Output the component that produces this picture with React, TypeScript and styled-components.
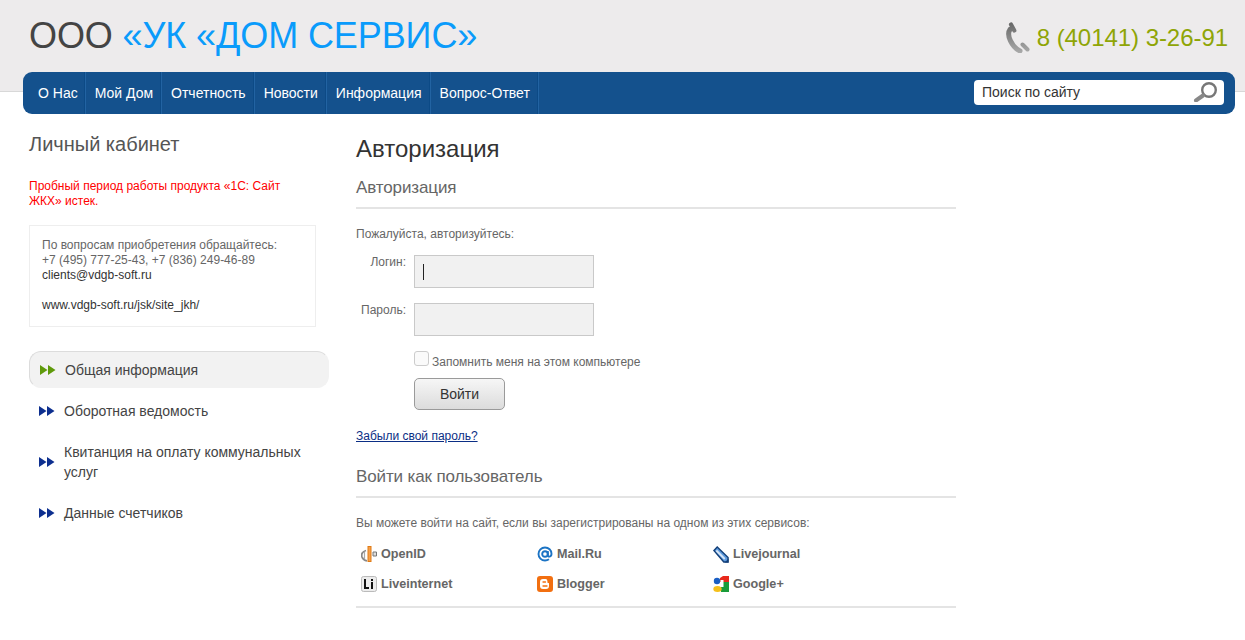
import React from 'react'
import styled, { createGlobalStyle } from 'styled-components'

const GlobalStyle = createGlobalStyle`
  html, body {
    margin: 0;
    background: #fff;
    font-family: "Liberation Sans", Arial, sans-serif;
    overflow: hidden;
  }
`

const Page = styled.div`
  width: 1245px;
  height: 640px;
  overflow: hidden;
`

const Header = styled.header`
  align-items: flex-start;
  background: #edebec;
  border-bottom: 1px solid #d8d8d8;
  box-sizing: border-box;
  display: flex;
  height: 92px;
  justify-content: space-between;
  padding: 15px 17px 0 29px;
`

const Logo = styled.div`
  color: #444;
  font-size: 36px;
  letter-spacing: -0.1px;
  line-height: 42px;
  white-space: nowrap;
`

const LogoAccent = styled.span`
  color: #0a9bfb;
`

const Phone = styled.div`
  align-items: center;
  color: #8fa506;
  display: flex;
  font-size: 24px;
  gap: 7px;
  letter-spacing: -0.05px;
  line-height: 30px;
  margin-top: 7px;
`

const Nav = styled.nav`
  align-items: stretch;
  background: #14518d;
  border-radius: 9px;
  display: flex;
  height: 42px;
  justify-content: space-between;
  margin: -20px 10px 0 23px;
  position: relative;
`

const NavList = styled.ul`
  display: flex;
  list-style: none;
  margin: 0;
  padding: 0 0 0 6px;
`

const NavItem = styled.li`
  border-right: 1px solid #0c4a86;
  box-shadow: 1px 0 0 #2263a2;
  color: #fff;
  font-size: 14px;
  line-height: 42px;
  padding: 0 7px 0 10px;

  &:first-child {
    padding: 0 6px 0 9px;
  }
`

const Search = styled.div`
  align-items: center;
  background: #fff;
  border-radius: 4px;
  box-sizing: border-box;
  color: #333;
  display: flex;
  font-size: 14px;
  height: 25px;
  justify-content: space-between;
  line-height: 23px;
  margin: 8px 11px 0 0;
  padding: 0 6px 1px 8px;
  width: 250px;
`

const Content = styled.div`
  display: flex;
  padding: 0 0 0 29px;
`

const Sidebar = styled.aside`
  flex: none;
  padding-top: 18px;
  width: 327px;
`

const SideTitle = styled.div`
  color: #555;
  font-size: 20px;
  line-height: 24px;
`

const Warning = styled.div`
  color: #ff0000;
  font-size: 12px;
  line-height: 15px;
  margin-top: 23px;
  width: 280px;
`

const InfoBox = styled.div`
  border: 1px solid #eee;
  box-sizing: border-box;
  color: #666;
  font-size: 12px;
  height: 102px;
  line-height: 15px;
  margin-top: 16px;
  padding: 12px 12px 0;
  width: 287px;
`

const Dark = styled.span`
  color: #333;
`

const Menu = styled.ul`
  display: flex;
  flex-direction: column;
  list-style: none;
  margin: 24px 0 0;
  padding: 0;
  width: 300px;
`

const MenuItem = styled.li<{ $active?: boolean }>`
  align-items: center;
  background: ${(p) => (p.$active ? '#f2f2f2' : 'transparent')};
  border: 1px solid ${(p) => (p.$active ? '#dcdcdc' : 'transparent')};
  border-bottom-color: ${(p) => (p.$active ? '#f2f2f2' : 'transparent')};
  border-right-color: ${(p) => (p.$active ? '#f2f2f2' : 'transparent')};
  border-radius: 12px;
  box-sizing: border-box;
  color: #444;
  display: flex;
  font-size: 14px;
  gap: 9px;
  line-height: 20px;
  margin-bottom: ${(p) => (p.$active ? '2px' : '0')};
  padding: ${(p) => (p.$active ? '8px 10px 7px' : '10px 9px 9px')};
`

const MenuText = styled.span`
  width: 250px;
`

const Main = styled.main`
  flex: none;
  padding-top: 21px;
  width: 600px;
`

const PageTitle = styled.h1`
  color: #333;
  font-size: 24px;
  font-weight: 400;
  line-height: 28px;
  margin: 0;
`

const SectionTitle = styled.h2<{ $top: number }>`
  border-bottom: 2px solid #e4e4e4;
  color: #666;
  font-size: 17px;
  font-weight: 400;
  letter-spacing: -0.12px;
  line-height: 20px;
  margin: ${(p) => p.$top}px 0 0;
  padding-bottom: 9px;
`

const Hint = styled.div<{ $top: number }>`
  color: #666;
  font-size: 12px;
  line-height: 14px;
  margin-top: ${(p) => p.$top}px;
`

const FormRow = styled.div<{ $top: number }>`
  display: flex;
  gap: 8px;
  margin-top: ${(p) => p.$top}px;
`

const FieldLabel = styled.label`
  color: #666;
  font-size: 12px;
  line-height: 14px;
  text-align: right;
  width: 50px;
`

const Field = styled.div`
  align-items: center;
  background: #f1f1f1;
  border: 1px solid #c9c9c9;
  box-sizing: border-box;
  display: flex;
  height: 33px;
  padding-left: 8px;
  width: 180px;
`

const Caret = styled.span`
  background: #222;
  height: 16px;
  width: 1px;
`

const Controls = styled.div`
  display: flex;
  flex-direction: column;
  margin-left: 58px;
`

const Remember = styled.div`
  align-items: flex-start;
  color: #666;
  display: flex;
  font-size: 12px;
  gap: 3px;
  line-height: 14px;
  margin-top: 15px;
`

const RememberText = styled.span`
  padding-top: 4px;
`

const CheckBox = styled.span`
  background: #fafafa;
  border: 1px solid #ccc;
  border-radius: 3px;
  box-sizing: border-box;
  height: 15px;
  width: 15px;
`

const Submit = styled.button`
  background: linear-gradient(#f6f6f6, #dcdcdc);
  border: 1px solid #9a9a9a;
  border-radius: 5px;
  color: #333;
  font-family: inherit;
  font-size: 14px;
  height: 32px;
  margin-top: 9px;
  padding: 0;
  width: 91px;
`

const Forgot = styled.a`
  color: #0b2e85;
  display: block;
  font-size: 12px;
  line-height: 14px;
  margin-top: 19px;
  text-decoration: underline;
`

const Services = styled.div`
  border-bottom: 2px solid #e4e4e4;
  display: grid;
  grid-template-columns: 176px 176px 1fr;
  grid-auto-rows: 30px;
  margin-top: 9px;
  padding: 0 0 7px 5px;
`

const Service = styled.div`
  align-items: center;
  color: #666;
  display: flex;
  font-size: 12.6px;
  font-weight: 700;
  gap: 4px;
`

const IconBox = styled.svg`
  flex: none;
`

const Arrows = ({ color }: { color: string }) => (
  <IconBox width="16" height="10" viewBox="0 0 16 10">
    <path d="M0 0l7.500 5-7.500 5zM8 0l7.500 5-7.500 5z" fill={color} />
  </IconBox>
)

const PhoneIcon = () => (
  <IconBox width="25" height="31" viewBox="0 0 25 31">
    <defs>
      <linearGradient id="ph" gradientUnits="userSpaceOnUse" x1="0" y1="0" x2="0" y2="31">
        <stop offset="0" stopColor="#666" />
        <stop offset="1" stopColor="#aaa" />
      </linearGradient>
    </defs>
    <path d="M6 2.500l3.300 6" stroke="url(#ph)" strokeWidth="4.200" strokeLinecap="round" fill="none" />
    <path d="M5 7.500C1 13 7 25 15 29" stroke="url(#ph)" strokeWidth="5" strokeLinecap="round" fill="none" />
    <path d="M17.500 22.500l5 5" stroke="url(#ph)" strokeWidth="4" strokeLinecap="round" fill="none" />
  </IconBox>
)

const SearchIcon = () => (
  <IconBox width="25" height="20" viewBox="0 0 25 20">
    <circle cx="16" cy="8" r="6.800" fill="#fff" stroke="#777" strokeWidth="2.400" />
    <path d="M10 13.500l-7 5" stroke="#888" strokeWidth="4" strokeLinecap="round" />
  </IconBox>
)

const OpenIdIcon = () => (
  <IconBox width="16" height="16" viewBox="0 0 16 16">
    <path d="M5 4.500C1.500 5.500 0 8 1 11c.8 2.200 2.500 3.500 5 3.800" fill="none" stroke="#888" strokeWidth="1.800" />
    <path d="M3.500 6v7" stroke="#aaa" strokeWidth="1.200" />
    <rect x="7" y="0.500" width="3" height="15" fill="#f6a04a" stroke="#e07b14" strokeWidth="1" />
    <path d="M12 6h3.500v4H12z" fill="#ddd" stroke="#777" strokeWidth="1" />
  </IconBox>
)

const MailIcon = () => (
  <IconBox width="16" height="16" viewBox="0 0 16 16">
    <circle cx="8" cy="8" r="2.800" fill="none" stroke="#1b73c4" strokeWidth="1.900" />
    <path
      d="M10.800 5v4.200c0 2.200 3.700 2 3.700-1.400C14.500 4.200 11.600 1.500 8 1.500S1.500 4.400 1.500 8s2.900 6.500 6.500 6.500c1.800 0 3-.5 4-1.200"
      fill="none"
      stroke="#1b73c4"
      strokeWidth="1.900"
    />
  </IconBox>
)

const JournalIcon = () => (
  <IconBox width="16" height="17" viewBox="0 0 17 17" preserveAspectRatio="none">
    <path d="M4.500 1L16 11.500V16h-4.500L1 4.500z" fill="#5f9ce0" stroke="#123f78" strokeWidth="1.500" />
    <path d="M3.500 4.500l9 8.500" stroke="#d7e6f6" strokeWidth="2" />
    <path d="M12.500 16.500l4-4v4z" fill="#123f78" />
  </IconBox>
)

const LiIcon = () => (
  <IconBox width="16" height="16" viewBox="0 0 16 16">
    <rect x=".5" y=".5" width="15" height="15" rx="2" fill="#ececec" stroke="#bbb" />
    <path d="M3 3h2v8h3v2H3zM10 6h2v7h-2zM10 3h2v2h-2z" fill="#111" />
  </IconBox>
)

const BloggerIcon = () => (
  <IconBox width="16" height="16" viewBox="0 0 16 16">
    <rect width="16" height="16" rx="3" fill="#f26f10" />
    <path
      d="M6 3h2.500C10 3 10.500 4 10.500 6.500c0 .5.500.5 1 .5.500 0 .500.500.500 1v2c0 2-1 3-3 3H6c-2 0-3-1-3-3V6c0-2 1-3 3-3z"
      fill="#fff"
    />
    <path d="M6 6h2.500M6 10h4" stroke="#f26f10" strokeWidth="1.300" strokeLinecap="round" />
  </IconBox>
)

const GoogleIcon = () => (
  <IconBox width="16" height="16" viewBox="0 0 16 16">
    <rect x="7" width="9" height="6" fill="#e8291c" />
    <rect x="8" y="6" width="8" height="10" fill="#199b3a" />
    <path d="M7 0h3l-3 2z" fill="#fff" />
    <circle cx="4" cy="5" r="3.200" fill="#1a5fc4" />
    <ellipse cx="4.500" cy="13" rx="4.200" ry="3" fill="#f5c01b" />
    <rect x="7.500" y="4" width="3" height="7" fill="#fff" />
  </IconBox>
)

const navItems = ['О Нас', 'Мой Дом', 'Отчетность', 'Новости', 'Информация', 'Вопрос-Ответ']

const services = [
  { name: 'OpenID', icon: <OpenIdIcon /> },
  { name: 'Mail.Ru', icon: <MailIcon /> },
  { name: 'Livejournal', icon: <JournalIcon /> },
  { name: 'Liveinternet', icon: <LiIcon /> },
  { name: 'Blogger', icon: <BloggerIcon /> },
  { name: 'Google+', icon: <GoogleIcon /> },
]

export default function App() {
  return (
    <Page>
      <GlobalStyle />
      <Header>
        <Logo>
          ООО <LogoAccent>«УК «ДОМ СЕРВИС»</LogoAccent>
        </Logo>
        <Phone>
          <PhoneIcon />8 (40141) 3-26-91
        </Phone>
      </Header>
      <Nav>
        <NavList>
          {navItems.map((item) => (
            <NavItem key={item}>{item}</NavItem>
          ))}
        </NavList>
        <Search>
          Поиск по сайту
          <SearchIcon />
        </Search>
      </Nav>
      <Content>
        <Sidebar>
          <SideTitle>Личный кабинет</SideTitle>
          <Warning>Пробный период работы продукта «1С: Сайт ЖКХ» истек.</Warning>
          <InfoBox>
            По вопросам приобретения обращайтесь:
            <br />
            +7 (495) 777-25-43, +7 (836) 249-46-89
            <br />
            <Dark>clients@vdgb-soft.ru</Dark>
            <br />
            <br />
            <Dark>www.vdgb-soft.ru/jsk/site_jkh/</Dark>
          </InfoBox>
          <Menu>
            <MenuItem $active>
              <Arrows color="#5f9a0b" />
              <MenuText>Общая информация</MenuText>
            </MenuItem>
            <MenuItem>
              <Arrows color="#0d2f8f" />
              <MenuText>Оборотная ведомость</MenuText>
            </MenuItem>
            <MenuItem>
              <Arrows color="#0d2f8f" />
              <MenuText>Квитанция на оплату коммунальных услуг</MenuText>
            </MenuItem>
            <MenuItem>
              <Arrows color="#0d2f8f" />
              <MenuText>Данные счетчиков</MenuText>
            </MenuItem>
          </Menu>
        </Sidebar>
        <Main>
          <PageTitle>Авторизация</PageTitle>
          <SectionTitle $top={15}>Авторизация</SectionTitle>
          <Hint $top={18}>Пожалуйста, авторизуйтесь:</Hint>
          <FormRow $top={14}>
            <FieldLabel>Логин:</FieldLabel>
            <Field>
              <Caret />
            </Field>
          </FormRow>
          <FormRow $top={15}>
            <FieldLabel>Пароль:</FieldLabel>
            <Field />
          </FormRow>
          <Controls>
            <Remember>
              <CheckBox />
              <RememberText>Запомнить меня на этом компьютере</RememberText>
            </Remember>
            <Submit>Войти</Submit>
          </Controls>
          <Forgot>Забыли свой пароль?</Forgot>
          <SectionTitle $top={24}>Войти как пользователь</SectionTitle>
          <Hint $top={18}>Вы можете войти на сайт, если вы зарегистрированы на одном из этих сервисов:</Hint>
          <Services>
            {services.map((service) => (
              <Service key={service.name}>
                {service.icon}
                {service.name}
              </Service>
            ))}
          </Services>
        </Main>
      </Content>
    </Page>
  )
}
